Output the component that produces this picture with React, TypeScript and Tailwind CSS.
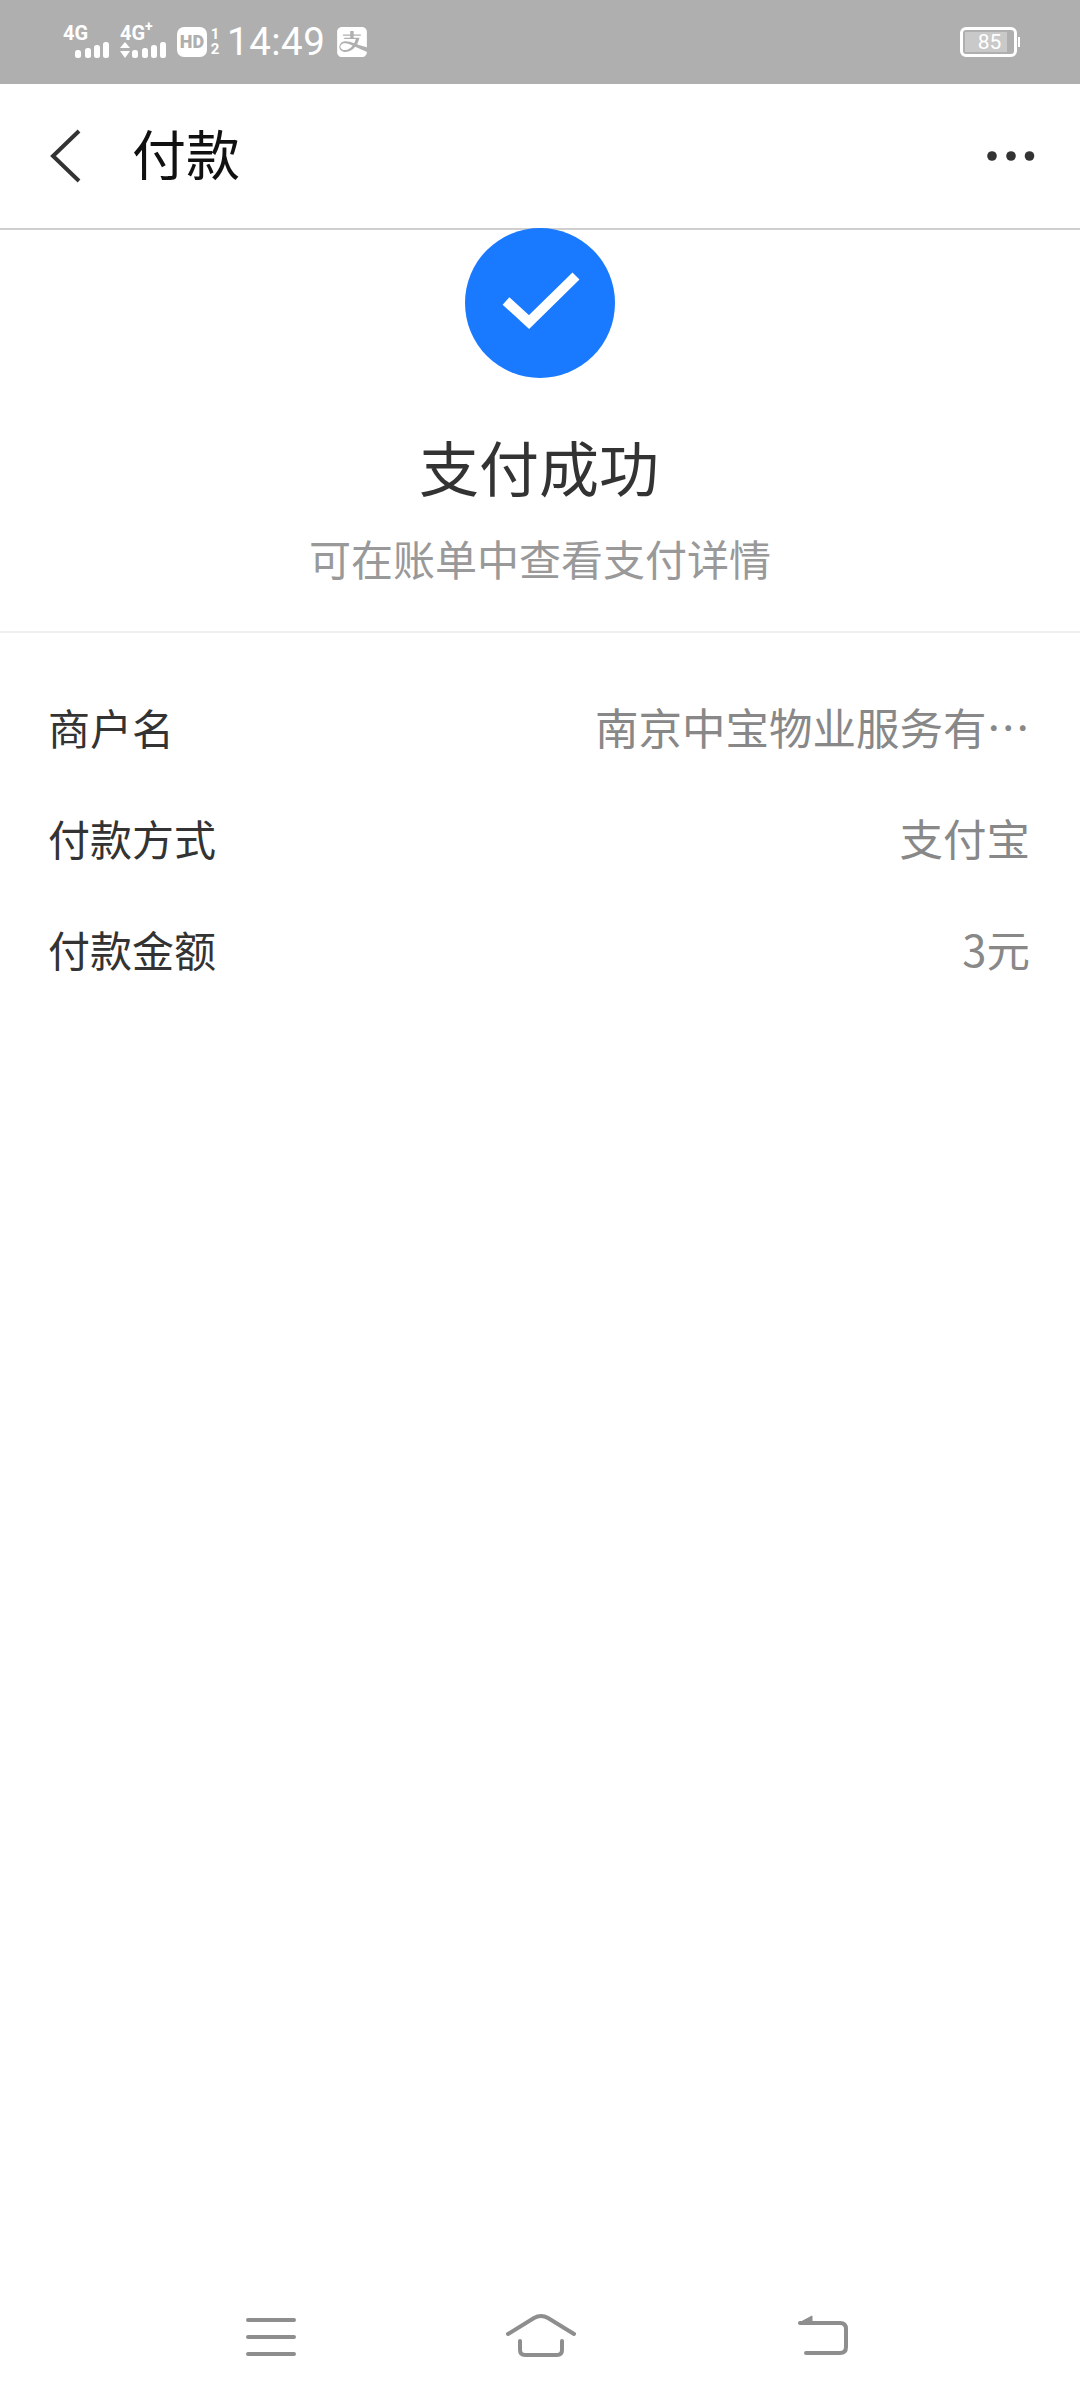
import { SiAlipay } from "react-icons/si"

function SignalBars({ arrows }: { arrows?: boolean }) {
  return (
    <svg width="46" height="18" viewBox="0 0 46 18" fill="#fff" className="block">
      {arrows && (
        <>
          <path d="M5 1 L10 7 L0 7 Z" />
          <path d="M5 17 L10 10 L0 10 Z" />
        </>
      )}
      <rect x="12" y="9" width="6" height="8" rx="2.5" />
      <rect x="22" y="7" width="6" height="10" rx="2.5" />
      <rect x="31" y="4" width="6" height="13" rx="2.5" />
      <rect x="40" y="1" width="6" height="16" rx="2.5" />
    </svg>
  )
}

function StatusBar() {
  return (
    <div className="h-[84px] bg-[#afafaf] flex items-center justify-between pl-[63px] pr-[60px] text-white shrink-0 font-['Roboto',sans-serif]">
      <div className="flex items-center">
        <div className="w-[57px] flex flex-col">
          <span className="text-[20px] leading-[15px] font-bold">4G</span>
          <SignalBars />
        </div>
        <div className="w-[46px] flex flex-col">
          <span className="text-[20px] leading-[15px] font-bold">
            4G<sup className="text-[14px] leading-none align-top">+</sup>
          </span>
          <SignalBars arrows />
        </div>
        <div className="ml-[11px] w-[30px] h-[30px] rounded-[7px] bg-white flex items-center justify-center text-[#afafaf] text-[18px] leading-none font-black">
          HD
        </div>
        <div className="ml-[3px] w-[10px] flex flex-col items-center text-[15px] leading-[15px] font-bold">
          <span>1</span>
          <span>2</span>
        </div>
        <span className="ml-[7px] text-[38.500px] leading-none tracking-[0.5px]">14:49</span>
        <SiAlipay className="ml-[12px]" size={30} color="#fff" />
      </div>
      <div className="flex items-center">
        <div className="w-[57px] h-[30px] rounded-[6px] border-[3px] border-white p-[2px]">
          <div className="w-[42px] h-full pl-[7px] bg-[#c9c9c9] flex items-center justify-center text-[21px] leading-none">
            85
          </div>
        </div>
        <div className="ml-[1px] w-[2px] h-[10px] bg-white" />
      </div>
    </div>
  )
}

function Header() {
  return (
    <div className="h-[146px] bg-white border-b-2 border-[#cfcfcf] flex items-center justify-between pl-[50px] pr-[41px] shrink-0">
      <div className="flex items-center">
        <svg width="32" height="54" viewBox="0 0 32 54" fill="none" stroke="#333" strokeWidth="4" className="block">
          <path d="M29 2 L3 27 L29 52" />
        </svg>
        <h1 className="ml-[50px] pb-[6px] text-[54px] leading-none text-[#111]">付款</h1>
      </div>
      <svg width="52" height="10" viewBox="0 0 52 10" fill="#333" className="block">
        <circle cx="5" cy="5" r="4.8" />
        <circle cx="24" cy="5" r="4.8" />
        <circle cx="42.5" cy="5" r="4.8" />
      </svg>
    </div>
  )
}

function Row({ label, value }: { label: string; value: string }) {
  return (
    <div className="h-[111px] flex items-center justify-between gap-[40px]">
      <span className="text-[42px] leading-[50px] text-[#333] shrink-0">{label}</span>
      <span className="text-[43.5px] leading-[50px] text-[#888] whitespace-nowrap">{value}</span>
    </div>
  )
}

function NavBar() {
  return (
    <div className="mt-auto h-[90px] flex items-start pl-[246px] shrink-0">
      <svg width="50" height="50" viewBox="0 0 50 50" fill="none" stroke="#8e8e8e" strokeWidth="4" strokeLinecap="round" className="block">
        <path d="M2 10 H48 M2 27 H48 M2 44 H48" />
      </svg>
      <svg width="70" height="50" viewBox="0 0 70 50" fill="none" stroke="#8e8e8e" strokeWidth="4" strokeLinecap="round" strokeLinejoin="round" className="block ml-[210px]">
        <path d="M2 24 L28 8 Q35 4 42 8 L68 24" />
        <path d="M14 31 V40 Q14 45 19 45 H51 Q56 45 56 40 V31" />
      </svg>
      <svg width="52" height="50" viewBox="0 0 52 50" fill="none" stroke="#8e8e8e" strokeWidth="4" strokeLinecap="round" strokeLinejoin="round" className="block ml-[221px]">
        <path d="M3 13 H43 Q49 13 49 19 V37 Q49 43 43 43 H9" />
        <path d="M2 13 L15 6 V13 Z" fill="#8e8e8e" strokeWidth="1" />
      </svg>
    </div>
  )
}

export default function App() {
  return (
    <div lang="zh-CN" className="w-[1080px] h-[2400px] bg-white flex flex-col font-['Noto_Sans_CJK_SC',sans-serif]">
      <StatusBar />
      <Header />
      <div className="flex flex-col items-center border-b-2 border-[#f0f0f0] h-[403px] shrink-0">
        <div className="-mt-[2px] w-[150px] h-[150px] rounded-full bg-[#1a7aff] flex items-center justify-center">
          <svg width="84" height="64" viewBox="0 0 84 64" fill="none" stroke="#fff" strokeWidth="10" className="block">
            <path d="M8 30 L31 51 L78 5" />
          </svg>
        </div>
        <h2 className="mt-[58px] pr-[2px] text-[60px] leading-[60px] text-[#333]">支付成功</h2>
        <p className="mt-[41px] text-[42px] leading-[42px] text-[#999]">可在账单中查看支付详情</p>
      </div>
      <div className="pt-[38px] pl-[48px] pr-[50px]">
        <Row label="商户名" value="南京中宝物业服务有…" />
        <Row label="付款方式" value="支付宝" />
        <Row label="付款金额" value="3元" />
      </div>
      <NavBar />
    </div>
  )
}
